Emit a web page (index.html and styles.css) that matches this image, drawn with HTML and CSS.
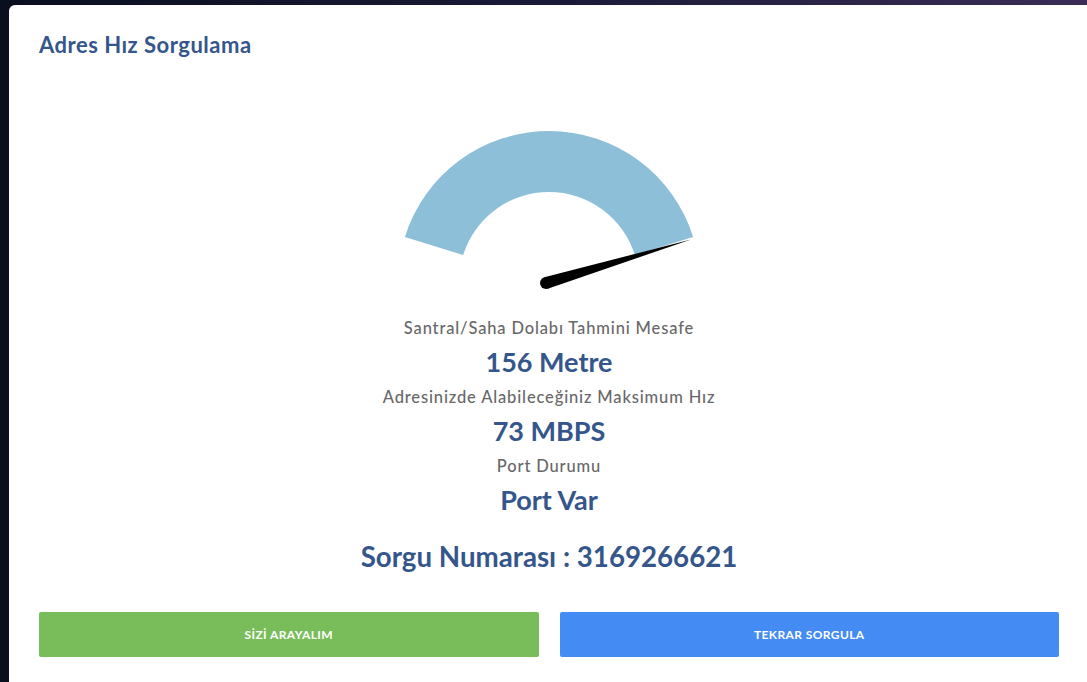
FILE: index.html
```html
<!DOCTYPE html>
<html>

<head>
  <title>Adres Hız Sorgulama</title>
  <link rel="stylesheet" href="styles.css">
</head>

<body>
  <div class="modal">
    <h1 class="modal-title">Adres Hız Sorgulama</h1>

    <div class="gauge">
      <svg width="300" height="160" viewBox="0 0 300 160">
        <path class="gauge-arc" d="M 5.9 106.9 A 151 151 0 0 1 294.1 106.9 L 235.9 125.1 A 90 90 0 0 0 64.1 125.1 Z" />
        <circle class="gauge-needle" cx="147" cy="153" r="6" />
        <polygon class="gauge-needle" points="145.3,147.3 292,109.5 148.7,158.7" />
      </svg>
    </div>

    <div class="result">
      <div class="result-label">Santral/Saha Dolabı Tahmini Mesafe</div>
      <div class="result-value">156 Metre</div>
      <div class="result-label">Adresinizde Alabileceğiniz Maksimum Hız</div>
      <div class="result-value">73 MBPS</div>
      <div class="result-label">Port Durumu</div>
      <div class="result-value">Port Var</div>
      <div class="query-number">Sorgu Numarası : 3169266621</div>
    </div>

    <div class="actions">
      <button class="btn btn-green">SİZİ ARAYALIM</button>
      <button class="btn btn-blue">TEKRAR SORGULA</button>
    </div>
  </div>
</body>

</html>
```

FILE: styles.css
```css
html,
body {
  height: 100%;
  overflow: hidden;
}

body {
  margin: 0;
  font-family: Lato, "Open Sans", sans-serif;
  background: linear-gradient(90deg, #0a0f20 0%, #191a36 50%, #3b2d56 100%);
}

.modal {
  box-sizing: border-box;
  width: 1080px;
  min-height: 700px;
  margin: 5px 0 0 9px;
  padding: 28px 30px 30px;
  background-color: #fff;
  border-radius: 6px 0 0 0;
}

.modal-title {
  margin: 0;
  font-size: 22px;
  line-height: 24px;
  font-weight: 700;
  letter-spacing: 0.5px;
  color: #35568b;
}

.gauge {
  display: flex;
  justify-content: center;
  margin-top: 73px;
}

.gauge svg {
  display: block;
  margin-left: -1px;
}

.gauge-arc {
  fill: #8dbfd9;
}

.gauge-needle {
  fill: #000;
}

.result {
  display: flex;
  flex-direction: column;
  align-items: center;
  margin-top: 27px;
  text-align: center;
}

.result-label {
  margin-top: 7px;
  font-size: 16.5px;
  line-height: 22px;
  font-weight: 500;
  letter-spacing: 0.85px;
  color: #686868;
}

.result-label:first-child {
  margin-top: 0;
}

.result-value {
  margin-top: 6px;
  font-size: 27px;
  line-height: 34px;
  font-weight: 700;
  color: #35568b;
}

.query-number {
  margin-top: 22px;
  font-size: 27.7px;
  line-height: 36px;
  font-weight: 700;
  color: #35568b;
}

.actions {
  display: flex;
  gap: 21px;
  margin-top: 37px;
}

.btn {
  flex: 1;
  height: 45px;
  border: none;
  border-radius: 2px;
  font-family: Lato, sans-serif;
  font-size: 12px;
  font-weight: 700;
  letter-spacing: 0.4px;
  color: #fff;
  cursor: pointer;
}

.btn-green {
  background-color: #79bd5b;
}

.btn-blue {
  background-color: #448bf4;
}
```
